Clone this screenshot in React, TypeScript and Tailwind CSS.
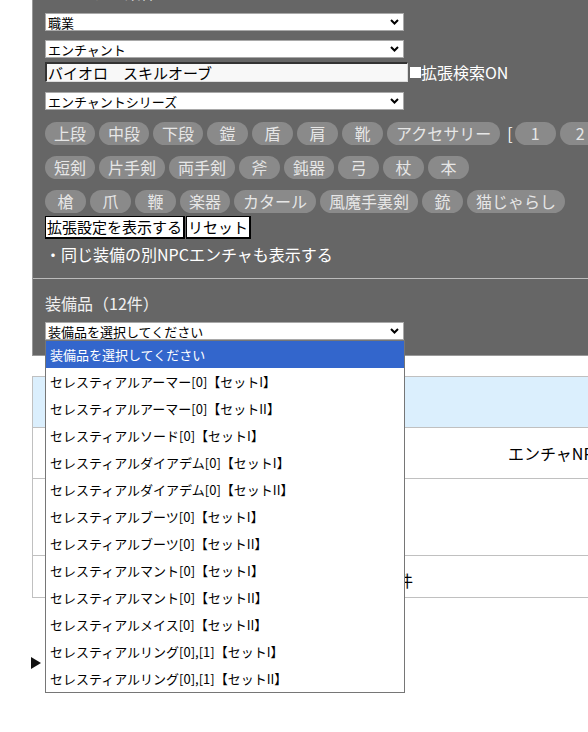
import React from 'react';

const FONT = "font-['Noto_Sans_CJK_JP','Noto_Sans',sans-serif]";

const row1 = ['上段', '中段', '下段', '鎧', '盾', '肩', '靴', 'アクセサリー'];
const row2 = ['短剣', '片手剣', '両手剣', '斧', '鈍器', '弓', '杖', '本'];
const row3 = ['槍', '爪', '鞭', '楽器', 'カタール', '風魔手裏剣', '銃', '猫じゃらし'];

const equipment = [
  '装備品を選択してください',
  'セレスティアルアーマー[0]【セットI】',
  'セレスティアルアーマー[0]【セットII】',
  'セレスティアルソード[0]【セットI】',
  'セレスティアルダイアデム[0]【セットI】',
  'セレスティアルダイアデム[0]【セットII】',
  'セレスティアルブーツ[0]【セットI】',
  'セレスティアルブーツ[0]【セットII】',
  'セレスティアルマント[0]【セットI】',
  'セレスティアルマント[0]【セットII】',
  'セレスティアルメイス[0]【セットII】',
  'セレスティアルリング[0],[1]【セットI】',
  'セレスティアルリング[0],[1]【セットII】',
];

function Chevron() {
  return (
    <svg width="9" height="6" viewBox="0 0 9 6" className="shrink-0">
      <path d="M1 1l3.5 3.5L8 1" stroke="#000" strokeWidth="2" fill="none" />
    </svg>
  );
}

function Select({ text, className = '' }: { text: string; className?: string }) {
  return (
    <div
      className={`flex h-[18px] w-[359px] items-center justify-between border border-[#a9a9a9] bg-white pl-[2px] pr-[4px] text-[13px] leading-none text-black ${className}`}
    >
      <span>{text}</span>
      <Chevron />
    </div>
  );
}

function Pill({ label }: { label: string }) {
  return (
    <span className="h-[23px] min-w-[41px] shrink-0 rounded-full bg-[#8a8a8a] px-[9px] text-center text-[16px] leading-[23px] text-[#e6e6e6]">
      {label}
    </span>
  );
}

export default function App() {
  return (
    <div className={`relative h-[732px] overflow-hidden bg-white text-black ${FONT}`}>
      {/* filter panel */}
      <div className="-mt-[18px] ml-[32px] border-b border-l border-[#999] bg-[#666]">
        <div className="border-b border-[#bbb] px-[12px] pb-[14px]">
          <div className="h-[20px] text-[16px] leading-[20px] text-[#eee]">フィルター条件</div>
          <Select text="職業" className="mt-[11px]" />
          <Select text="エンチャント" className="mt-[9px]" />
          <div className="mt-[4px] flex h-[20px] items-center whitespace-nowrap">
            <div className="h-[20px] w-[363px] border-l-2 border-t-2 border-b border-r border-l-[#333] border-t-[#333] border-b-[#ddd] border-r-[#ddd] bg-[#f8f8f8] pl-[1px] text-[15px] leading-[17px] text-black">
              バイオロ　スキルオーブ
            </div>
            <span className="ml-[2px] h-[11px] w-[11px] bg-white" />
            <span className="text-[16px] leading-[20px] text-white">拡張検索ON</span>
          </div>
          <Select text="エンチャントシリーズ" className="mt-[10px]" />

          <div className="mt-[12px] flex gap-[4px] whitespace-nowrap">
            {row1.map((p) => (
              <Pill key={p} label={p} />
            ))}
            <span className="-mr-[2px] ml-[3px] text-[16px] leading-[23px] text-white">[</span>
            <Pill label="1" />
            <Pill label="2" />
            <Pill label="3" />
          </div>
          <div className="mt-[11px] flex gap-[4px] whitespace-nowrap">
            {row2.map((p) => (
              <Pill key={p} label={p} />
            ))}
          </div>
          <div className="mt-[11px] flex gap-[4px] whitespace-nowrap">
            {row3.map((p) => (
              <Pill key={p} label={p} />
            ))}
          </div>

          <div className="mt-[3px] flex gap-[1px]">
            <button className="h-[23px] border border-b-2 border-r-2 border-black bg-white px-[1px] text-[15px] leading-[20px] text-black">
              拡張設定を表示する
            </button>
            <button className="h-[23px] border border-b-2 border-r-2 border-black bg-white px-[1px] text-[15px] leading-[20px] text-black">
              リセット
            </button>
          </div>
          <div className="mt-[5px] h-[20px] text-[16px] leading-[20px] text-white">
            ・同じ装備の別NPCエンチャも表示する
          </div>
        </div>

        <div className="px-[12px] pb-[15px] pt-[14px]">
          <div className="h-[20px] text-[16px] leading-[20px] text-[#f0f0f0]">装備品（12件）</div>
          <Select text="装備品を選択してください" className="mt-[9px]" />
        </div>
      </div>

      {/* results table */}
      <div className="ml-[32px] mt-[20px] border-l border-t border-[#c0c0c0]">
        <div className="h-[51px] border-b border-[#c0c0c0] bg-[#dbeffd]" />
        <div className="flex h-[51px] items-center whitespace-nowrap border-b border-[#c0c0c0] pl-[475px] text-[16px]">
          エンチャNPC
        </div>
        <div className="h-[77px] border-b border-[#c0c0c0]" />
        <div className="flex h-[42px] items-center whitespace-nowrap border-b border-[#c0c0c0] pl-[364px] pt-[6px] text-[16px]">
          件
        </div>
      </div>

      <div className="ml-[31px] mt-[59px] flex h-[12px] items-center">
        <svg width="10" height="12" viewBox="0 0 10 12">
          <path d="M0 0L10 6L0 12Z" fill="#111" />
        </svg>
      </div>

      {/* open select list */}
      <div className="absolute left-[45px] top-[340px] w-[360px] border border-[#767676] bg-white">
        {equipment.map((e, i) => (
          <div
            key={e}
            className={`flex h-[27px] items-center whitespace-nowrap pl-[4px] text-[13px] ${
              i === 0 ? 'bg-[#3366cc] text-white' : 'text-black'
            }`}
          >
            {e}
          </div>
        ))}
      </div>
    </div>
  );
}
